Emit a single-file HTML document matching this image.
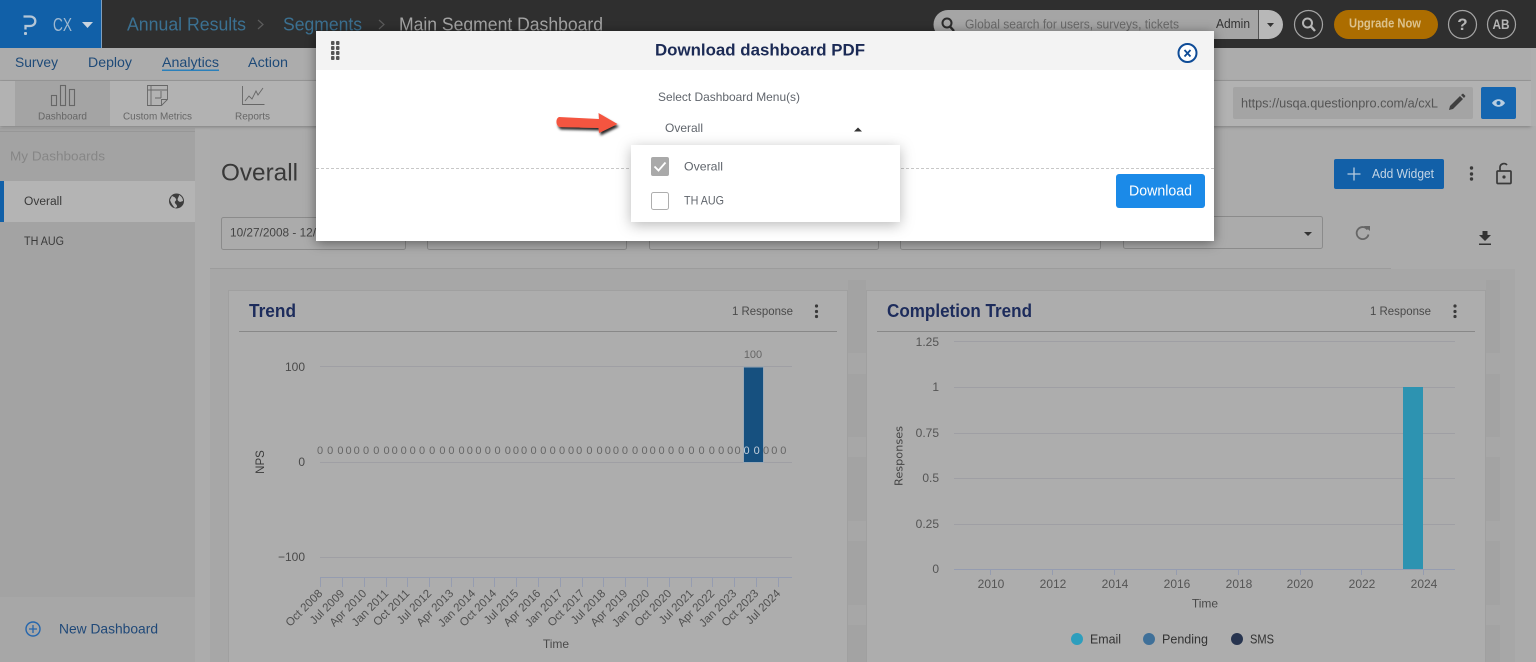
<!DOCTYPE html>
<html><head><meta charset="utf-8"><title>Download dashboard PDF</title>
<style>
html,body{margin:0;padding:0;width:1536px;height:662px;overflow:hidden;background:#ababab}
svg{display:block;position:absolute;left:0;top:0}
text{font-family:"Liberation Sans",sans-serif;dominant-baseline:central}
</style></head><body>
<svg width="1536" height="662" viewBox="0 0 1536 662" xmlns="http://www.w3.org/2000/svg">
<defs>
<filter id="ms" x="-10%" y="-20%" width="120%" height="150%"><feDropShadow dx="0" dy="2" stdDeviation="6" flood-color="#000" flood-opacity=".45"/></filter>
<filter id="ds" x="-15%" y="-30%" width="130%" height="170%"><feDropShadow dx="0" dy="3" stdDeviation="7" flood-color="#000" flood-opacity=".28"/></filter>
<filter id="as" x="-20%" y="-40%" width="140%" height="200%"><feDropShadow dx="1.500" dy="2.500" stdDeviation="1.300" flood-color="#000" flood-opacity=".85"/></filter>
<filter id="rs" x="-5%" y="-20%" width="110%" height="160%"><feDropShadow dx="0" dy="1" stdDeviation="1.500" flood-color="#000" flood-opacity=".25"/></filter>
</defs>
<rect width="1536" height="662" fill="#ababab"/>

<!-- content panel -->
<rect x="210" y="269" width="1305" height="393" fill="#a7a7a7"/>
<rect x="210" y="268" width="1181" height="1" fill="#9c9c9c"/>
<g fill="#a3a3a3">
<rect x="1486" y="280" width="14" height="73"/><rect x="1486" y="374" width="14" height="63"/><rect x="1486" y="457" width="14" height="64"/><rect x="1486" y="541" width="14" height="64"/><rect x="1486" y="625" width="14" height="37"/>
<rect x="848" y="280" width="18" height="73"/><rect x="848" y="374" width="18" height="63"/><rect x="848" y="457" width="18" height="64"/><rect x="848" y="541" width="18" height="64"/><rect x="848" y="625" width="18" height="37"/>
</g>

<!-- sidebar -->
<rect x="0" y="128" width="195" height="534" fill="#a3a3a3"/>
<rect x="0" y="131" width="195" height="1" fill="#979797"/>
<rect x="0" y="597" width="195" height="65" fill="#a7a7a7"/>
<rect x="195" y="128" width="15" height="534" fill="#acacac"/>
<text x="10" y="156" font-size="13" fill="#868686" textLength="95" lengthAdjust="spacingAndGlyphs">My Dashboards</text>
<rect x="0" y="181" width="195" height="41" fill="#b4b4b4"/>
<rect x="0" y="181" width="4" height="41" fill="#1160a8"/>
<text x="24" y="202" font-size="11.500" fill="#3a3a3a" textLength="38" lengthAdjust="spacingAndGlyphs">Overall</text>
<circle cx="176.500" cy="201" r="7.500" fill="#3d3d3d"/>
<path d="M172 196c2 1 3 1 4 3s-2 2-1 4 2 1 2 4l-2 1c-2-2-4-5-5-8zM179 195c2 1 4 3 4 6l-3 1c-2-1-3-2-2-4s1-2 1-3z" fill="#b4b4b4"/>
<text x="24" y="242" font-size="11.500" fill="#3a3a3a" textLength="40" lengthAdjust="spacingAndGlyphs">TH AUG</text>
<circle cx="33" cy="629" r="7" fill="none" stroke="#2566ad" stroke-width="1.400"/>
<path d="M29 629h8M33 625v8" stroke="#2566ad" stroke-width="1.300"/>
<text x="59" y="628.500" font-size="14" fill="#1f4878" textLength="99" lengthAdjust="spacingAndGlyphs">New Dashboard</text>

<!-- topbar -->
<rect width="1536" height="48" fill="#2f2f2f"/>
<rect width="101" height="48" fill="#1160a8"/>
<rect x="101" width="1" height="48" fill="#7f9fbd"/>
<path d="M23.500 16.500h6.500c3.300 0 5.300 2.100 5.300 4.700s-2 4.800-5.300 4.800h-4.500v3.500" fill="none" stroke="#b5c6d6" stroke-width="2.300"/>
<rect x="24" y="32" width="3" height="3" rx="1" fill="#b5c6d6"/>
<text x="53" y="25" font-size="18" fill="#9eb8d0" textLength="19" lengthAdjust="spacingAndGlyphs">CX</text>
<path d="M82 22h11l-5.500 6z" fill="#c9d4df"/>
<g font-size="18">
<text x="127" y="24.500" fill="#3b7091" textLength="119" lengthAdjust="spacingAndGlyphs">Annual Results</text>
<path d="M258 20l5 4.500-5 4.500" fill="none" stroke="#5c5c5c" stroke-width="1.200"/>
<text x="283" y="24.500" fill="#3b7091" textLength="79" lengthAdjust="spacingAndGlyphs">Segments</text>
<path d="M379 20l5 4.500-5 4.500" fill="none" stroke="#5c5c5c" stroke-width="1.200"/>
<text x="399" y="24.500" fill="#a4a4a4" textLength="204" lengthAdjust="spacingAndGlyphs">Main Segment Dashboard</text>
</g>
<!-- search -->
<path d="M948 10h310v29h-310a14.500 14.500 0 0 1 0-29z" fill="#a5a5a5"/>
<path d="M1258 10h10.500a14.500 14.500 0 0 1 0 29h-10.500z" fill="#b8b8b8"/>
<rect x="1258" y="10" width="1" height="29" fill="#555"/>
<circle cx="947" cy="23" r="4.500" fill="none" stroke="#2b2b2b" stroke-width="2"/><path d="M950 26.500l4 4.500" stroke="#2b2b2b" stroke-width="2.400"/>
<text x="965" y="24.500" font-size="12.500" fill="#696969" textLength="214" lengthAdjust="spacingAndGlyphs">Global search for users, surveys, tickets</text>
<text x="1216" y="24" font-size="12.500" fill="#333" textLength="34" lengthAdjust="spacingAndGlyphs">Admin</text>
<path d="M1267 23h7l-3.500 4z" fill="#333"/>
<g fill="none" stroke="#a5a5a5" stroke-width="1.200">
<ellipse cx="1308.500" cy="24.500" rx="14" ry="14"/><ellipse cx="1462.500" cy="24.500" rx="14" ry="14"/><ellipse cx="1501.500" cy="24.500" rx="14" ry="14"/>
</g>
<circle cx="1307.500" cy="23" r="4.500" fill="none" stroke="#b5b5b5" stroke-width="2"/><path d="M1311 26.500l4 4.500" stroke="#b5b5b5" stroke-width="2.400"/>
<rect x="1334" y="10" width="104" height="29" rx="14.500" fill="#ac6d00"/>
<text x="1349" y="23.500" font-size="12.500" font-weight="700" fill="#dcc28c" textLength="72" lengthAdjust="spacingAndGlyphs">Upgrade Now</text>
<text x="1462.500" y="24.500" font-size="17" font-weight="700" fill="#b5b5b5" text-anchor="middle">?</text>
<text x="1501" y="24" font-size="14" font-weight="700" fill="#b5b5b5" text-anchor="middle" textLength="17" lengthAdjust="spacingAndGlyphs">AB</text>

<!-- nav -->
<rect y="48" width="1536" height="32" fill="#acacac"/>
<rect y="80" width="1536" height="1" fill="#9c9c9c"/>
<rect y="81" width="1531" height="45" fill="#b2b2b2" filter="url(#rs)"/>
<rect x="1531" y="48" width="5" height="78" fill="#aeaeae"/>
<g font-size="14" fill="#1e4a78">
<text x="15" y="62" textLength="43" lengthAdjust="spacingAndGlyphs">Survey</text>
<text x="88" y="62" textLength="44" lengthAdjust="spacingAndGlyphs">Deploy</text>
<text x="162" y="62" textLength="57" lengthAdjust="spacingAndGlyphs">Analytics</text>
<text x="248" y="62" textLength="40" lengthAdjust="spacingAndGlyphs">Action</text>
</g>
<rect x="162" y="69.500" width="57" height="1.500" fill="#2a80bb"/>
<rect x="15" y="81" width="95" height="45" fill="#a4a4a4"/>
<g fill="none" stroke="#666" stroke-width="1.100">
<rect x="51.500" y="95.500" width="5" height="10"/><rect x="60.500" y="85.500" width="5" height="20"/><rect x="69.500" y="89.500" width="5" height="16"/>
<path d="M147.500 85.500h20v14l-6 6h-14zM147.500 90h20M151 86v19M161.500 105.500v-6h6M155 98h6M161 91v7" stroke-width=".9"/>
<path d="M242.500 86v18.500h22M245 101l4-5 3 3 4-8 2 4 5-7" stroke-width=".9"/>
</g>
<g font-size="10.500" fill="#666">
<text x="38" y="116.500" textLength="49" lengthAdjust="spacingAndGlyphs">Dashboard</text>
<text x="123" y="116.500" textLength="69" lengthAdjust="spacingAndGlyphs">Custom Metrics</text>
<text x="235" y="116.500" textLength="35" lengthAdjust="spacingAndGlyphs">Reports</text>
</g>
<rect x="1233" y="87" width="240" height="32" rx="2" fill="#a4a4a4"/>
<text x="1241" y="103" font-size="13" fill="#555" textLength="197" lengthAdjust="spacingAndGlyphs">https://usqa.questionpro.com/a/cxL</text>
<path d="M1449 110l1-4 10-10 3 3-10 10zM1461 95l2-1.500 2.500 2.500-1.500 2z" fill="#3f3f3f"/>
<rect x="1481" y="87" width="35" height="32" rx="2" fill="#1566b0"/>
<path d="M1492 103c3-5 10-5 13 0-3 5-10 5-13 0z" fill="#b8cde0"/><circle cx="1498.500" cy="103" r="2" fill="#1566b0"/>

<!-- page head -->
<text x="221" y="173" font-size="24" fill="#383838" textLength="77" lengthAdjust="spacingAndGlyphs">Overall</text>
<rect x="1334" y="159" width="110" height="30" rx="2" fill="#1260a8"/>
<path d="M1347.500 174h13M1354 167.500v13" stroke="#b9cde0" stroke-width="1.300"/>
<text x="1372" y="174" font-size="12.500" fill="#c4d5e5" textLength="62" lengthAdjust="spacingAndGlyphs">Add Widget</text>
<g fill="#3a3a3a"><circle cx="1471.500" cy="168" r="1.700"/><circle cx="1471.500" cy="174" r="1.700"/><circle cx="1471.500" cy="179" r="1.700"/></g>
<rect x="1497" y="171" width="14" height="12.500" rx="1" fill="none" stroke="#3a3a3a" stroke-width="1.700"/>
<path d="M1500 171v-4a4 4 0 0 1 7 -2" fill="none" stroke="#3a3a3a" stroke-width="1.700"/>
<circle cx="1504" cy="177" r="1.600" fill="#3a3a3a"/>
<g fill="none" stroke="#8b8b8b">
<rect x="221.500" y="217.500" width="184" height="32" rx="2"/><rect x="427.500" y="217.500" width="199" height="32" rx="2"/>
<rect x="649.500" y="217.500" width="229" height="32" rx="2"/><rect x="900.500" y="217.500" width="200" height="32" rx="2"/>
<rect x="1123.500" y="216.500" width="199" height="32" rx="2"/>
</g>
<text x="230" y="232.500" font-size="12" fill="#444" textLength="86" lengthAdjust="spacingAndGlyphs">10/27/2008 - 12/</text>
<path d="M1304 232h8l-4 4z" fill="#333"/>
<path d="M1367.500 229.500a6 6 0 1 0 1 5" fill="none" stroke="#666" stroke-width="1.800"/><path d="M1364 226l6 0v5z" fill="#666"/>
<path d="M1482.500 231h5v4h3.500l-6 6-6-6h3.500zM1479 243.500h12v1.500h-12z" fill="#333"/>

<!-- Trend card -->
<rect x="228.500" y="290.500" width="619" height="372" fill="#adadad" stroke="#a0a0a0"/>
<rect x="239" y="331" width="598" height="1" fill="#888"/>
<text x="249" y="311" font-size="18" font-weight="700" fill="#1d2c5c" textLength="47" lengthAdjust="spacingAndGlyphs">Trend</text>
<text x="732" y="311" font-size="12" fill="#4a4a4a" textLength="61" lengthAdjust="spacingAndGlyphs">1 Response</text>
<g fill="#3a3a3a"><circle cx="816.500" cy="306" r="1.600"/><circle cx="816.500" cy="311.500" r="1.600"/><circle cx="816.500" cy="316.500" r="1.600"/></g>
<g stroke="#9f9fa4"><path d="M320 366.500h472M320 462.500h472M320 557.500h472"/></g>
<path d="M320 577.500h472" stroke="#959cb0"/>
<path d="M320.500 577v10M342.500 577v10M364.500 577v10M386.500 577v10M407.500 577v10M429.500 577v10M451.500 577v10M473.500 577v10M494.500 577v10M516.500 577v10M538.500 577v10M560.500 577v10M582.500 577v10M603.500 577v10M625.500 577v10M647.500 577v10M669.500 577v10M691.500 577v10M712.500 577v10M734.500 577v10M756.500 577v10M778.500 577v10" stroke="#959cb0"/>
<rect x="743.500" y="367" width="20" height="95.500" fill="#16507f" stroke="#9aa8b5"/>
<g font-size="12" fill="#4a4a4a" text-anchor="end">
<text x="305" y="367">100</text><text x="305" y="462">0</text><text x="305" y="557">−100</text>
</g>
<text x="753" y="355" font-size="11" fill="#666" text-anchor="middle">100</text>
<text font-size="11" fill="#666" text-anchor="middle" y="451" x="320 330.200 340.400 348.600 356.700 366.100 376.300 386.500 394.700 403.700 412.700 422 432.200 442.400 451.400 461.600 469.800 478.400 487.800 497.600 507.800 515.900 524.100 533.500 543.300 552.700 562 571 579.200 589.400 599.600 607.800 615.900 624.900 635.100 644.500 652.700 661.600 671 681.200 691.400 701.600 711.800 721.200 730.200 737.600">0000000000000000000000000000000000000000000000</text>
<text font-size="11" fill="#c5d0da" text-anchor="middle" y="451" x="746.500 756.700">00</text>
<text font-size="11" fill="#666" text-anchor="middle" y="451" x="766.100 774.300 783.300">000</text>
<text transform="translate(261 462) rotate(-90)" font-size="11.500" fill="#3a3a3a" text-anchor="middle">NPS</text>
<g font-size="11.500" fill="#505050" text-anchor="end">
<text transform="translate(321 592) rotate(-45)">Oct 2008</text>
<text transform="translate(343 592) rotate(-45)">Jul 2009</text>
<text transform="translate(365 592) rotate(-45)">Apr 2010</text>
<text transform="translate(387 592) rotate(-45)">Jan 2011</text>
<text transform="translate(408 592) rotate(-45)">Oct 2011</text>
<text transform="translate(430 592) rotate(-45)">Jul 2012</text>
<text transform="translate(452 592) rotate(-45)">Apr 2013</text>
<text transform="translate(474 592) rotate(-45)">Jan 2014</text>
<text transform="translate(495 592) rotate(-45)">Oct 2014</text>
<text transform="translate(517 592) rotate(-45)">Jul 2015</text>
<text transform="translate(539 592) rotate(-45)">Apr 2016</text>
<text transform="translate(561 592) rotate(-45)">Jan 2017</text>
<text transform="translate(583 592) rotate(-45)">Oct 2017</text>
<text transform="translate(604 592) rotate(-45)">Jul 2018</text>
<text transform="translate(626 592) rotate(-45)">Apr 2019</text>
<text transform="translate(648 592) rotate(-45)">Jan 2020</text>
<text transform="translate(670 592) rotate(-45)">Oct 2020</text>
<text transform="translate(692 592) rotate(-45)">Jul 2021</text>
<text transform="translate(713 592) rotate(-45)">Apr 2022</text>
<text transform="translate(735 592) rotate(-45)">Jan 2023</text>
<text transform="translate(757 592) rotate(-45)">Oct 2023</text>
<text transform="translate(779 592) rotate(-45)">Jul 2024</text>
</g>
<text x="556" y="644" font-size="12" fill="#4a4a4a" text-anchor="middle">Time</text>

<!-- Completion card -->
<rect x="866.500" y="290.500" width="619" height="372" fill="#adadad" stroke="#a0a0a0"/>
<rect x="877" y="331" width="598" height="1" fill="#888"/>
<text x="887" y="311" font-size="18" font-weight="700" fill="#1d2c5c" textLength="145" lengthAdjust="spacingAndGlyphs">Completion Trend</text>
<text x="1370" y="311" font-size="12" fill="#4a4a4a" textLength="61" lengthAdjust="spacingAndGlyphs">1 Response</text>
<g fill="#3a3a3a"><circle cx="1455" cy="306" r="1.600"/><circle cx="1455" cy="311.500" r="1.600"/><circle cx="1455" cy="316.500" r="1.600"/></g>
<path d="M954 341.500h501M954 387.500h501M954 433.500h501M954 478.500h501M954 524.500h501" stroke="#9f9fa4"/>
<path d="M954 569.500h501" stroke="#959cb0"/>
<path d="M990.500 569v6M1052.500 569v6M1114.500 569v6M1176.500 569v6M1238.500 569v6M1300.500 569v6M1361.500 569v6M1423.500 569v6" stroke="#959cb0"/>
<rect x="1403" y="387" width="20" height="182" fill="#2d93b1"/>
<g font-size="12" fill="#555" text-anchor="end">
<text x="939" y="342">1.25</text><text x="939" y="387">1</text><text x="939" y="433">0.75</text><text x="939" y="478">0.5</text><text x="939" y="524">0.25</text><text x="939" y="569">0</text>
</g>
<g font-size="12" fill="#555" text-anchor="middle">
<text x="991" y="584">2010</text><text x="1053" y="584">2012</text><text x="1115" y="584">2014</text><text x="1177" y="584">2016</text><text x="1239" y="584">2018</text><text x="1300" y="584">2020</text><text x="1362" y="584">2022</text><text x="1424" y="584">2024</text>
</g>
<text x="1205" y="603.500" font-size="12" fill="#4a4a4a" text-anchor="middle">Time</text>
<text transform="translate(899 456) rotate(-90)" font-size="11" fill="#444" text-anchor="middle" style="font-family:'DejaVu Sans',sans-serif" textLength="60" lengthAdjust="spacingAndGlyphs">Responses</text>
<ellipse cx="1077" cy="639" rx="6" ry="6" fill="#2d9ebd"/><ellipse cx="1149" cy="639" rx="6" ry="6" fill="#3f7099"/><ellipse cx="1237" cy="639" rx="6" ry="6" fill="#27344f"/>
<g font-size="12.500" fill="#333">
<text x="1090" y="639.500" textLength="31" lengthAdjust="spacingAndGlyphs">Email</text>
<text x="1162" y="639.500" textLength="46" lengthAdjust="spacingAndGlyphs">Pending</text>
<text x="1250" y="639.500" textLength="24" lengthAdjust="spacingAndGlyphs">SMS</text>
</g>

<!-- modal -->
<rect x="316" y="31" width="898" height="210" fill="#fff" filter="url(#ms)"/>
<rect x="316" y="31" width="898" height="39" fill="#f3f3f3"/>
<g fill="#555">
<rect x="331" y="41" width="3.500" height="4" rx="1"/><rect x="336" y="41" width="3.500" height="4" rx="1"/><rect x="331" y="46" width="3.500" height="4" rx="1"/><rect x="336" y="46" width="3.500" height="4" rx="1"/><rect x="331" y="51" width="3.500" height="4" rx="1"/><rect x="336" y="51" width="3.500" height="4" rx="1"/><rect x="331" y="56" width="3.500" height="4" rx="1"/><rect x="336" y="56" width="3.500" height="4" rx="1"/>
</g>
<text x="655" y="50" font-size="17" font-weight="700" fill="#1b2a55" textLength="210" lengthAdjust="spacingAndGlyphs">Download dashboard PDF</text>
<circle cx="1187.500" cy="53" r="9" fill="#fff" stroke="#0f4c97" stroke-width="2"/>
<path d="M1184.500 50l6 6.500M1190.500 50l-6 6.500" stroke="#0f4c97" stroke-width="1.800"/>
<path d="M316 168.500h898" stroke="#c8c8c8" stroke-dasharray="3 2"/>
<rect x="1116" y="174" width="89" height="34" rx="3" fill="#1b8ae8"/>
<text x="1129" y="191.500" font-size="14.500" fill="#fff" textLength="63" lengthAdjust="spacingAndGlyphs">Download</text>
<text x="658" y="97" font-size="12" fill="#60656c" textLength="142" lengthAdjust="spacingAndGlyphs">Select Dashboard Menu(s)</text>
<path d="M559 117l40 2-.5-6 19 11-18.500 9-.5-5-39-1c-4-1.500-4-8.500-.5-10z" fill="#f4553f" filter="url(#as)"/>
<text x="665" y="128" font-size="12" fill="#60656c" textLength="38" lengthAdjust="spacingAndGlyphs">Overall</text>
<path d="M854 131.500h8l-4-4z" fill="#333"/>
<rect x="631" y="145" width="269" height="77" fill="#fff" filter="url(#ds)"/>
<rect x="651" y="157" width="18" height="19" rx="2" fill="#a9a9a9"/>
<path d="M654.500 166.500l4 4 7-8" fill="none" stroke="#fff" stroke-width="1.800"/>
<text x="684" y="166.500" font-size="12" fill="#60656c" textLength="39" lengthAdjust="spacingAndGlyphs">Overall</text>
<rect x="651.500" y="192.500" width="17" height="17" rx="2" fill="#fff" stroke="#aeaeae"/>
<text x="684" y="200.500" font-size="12" fill="#60656c" textLength="40" lengthAdjust="spacingAndGlyphs">TH AUG</text>
</svg>
</body></html>
